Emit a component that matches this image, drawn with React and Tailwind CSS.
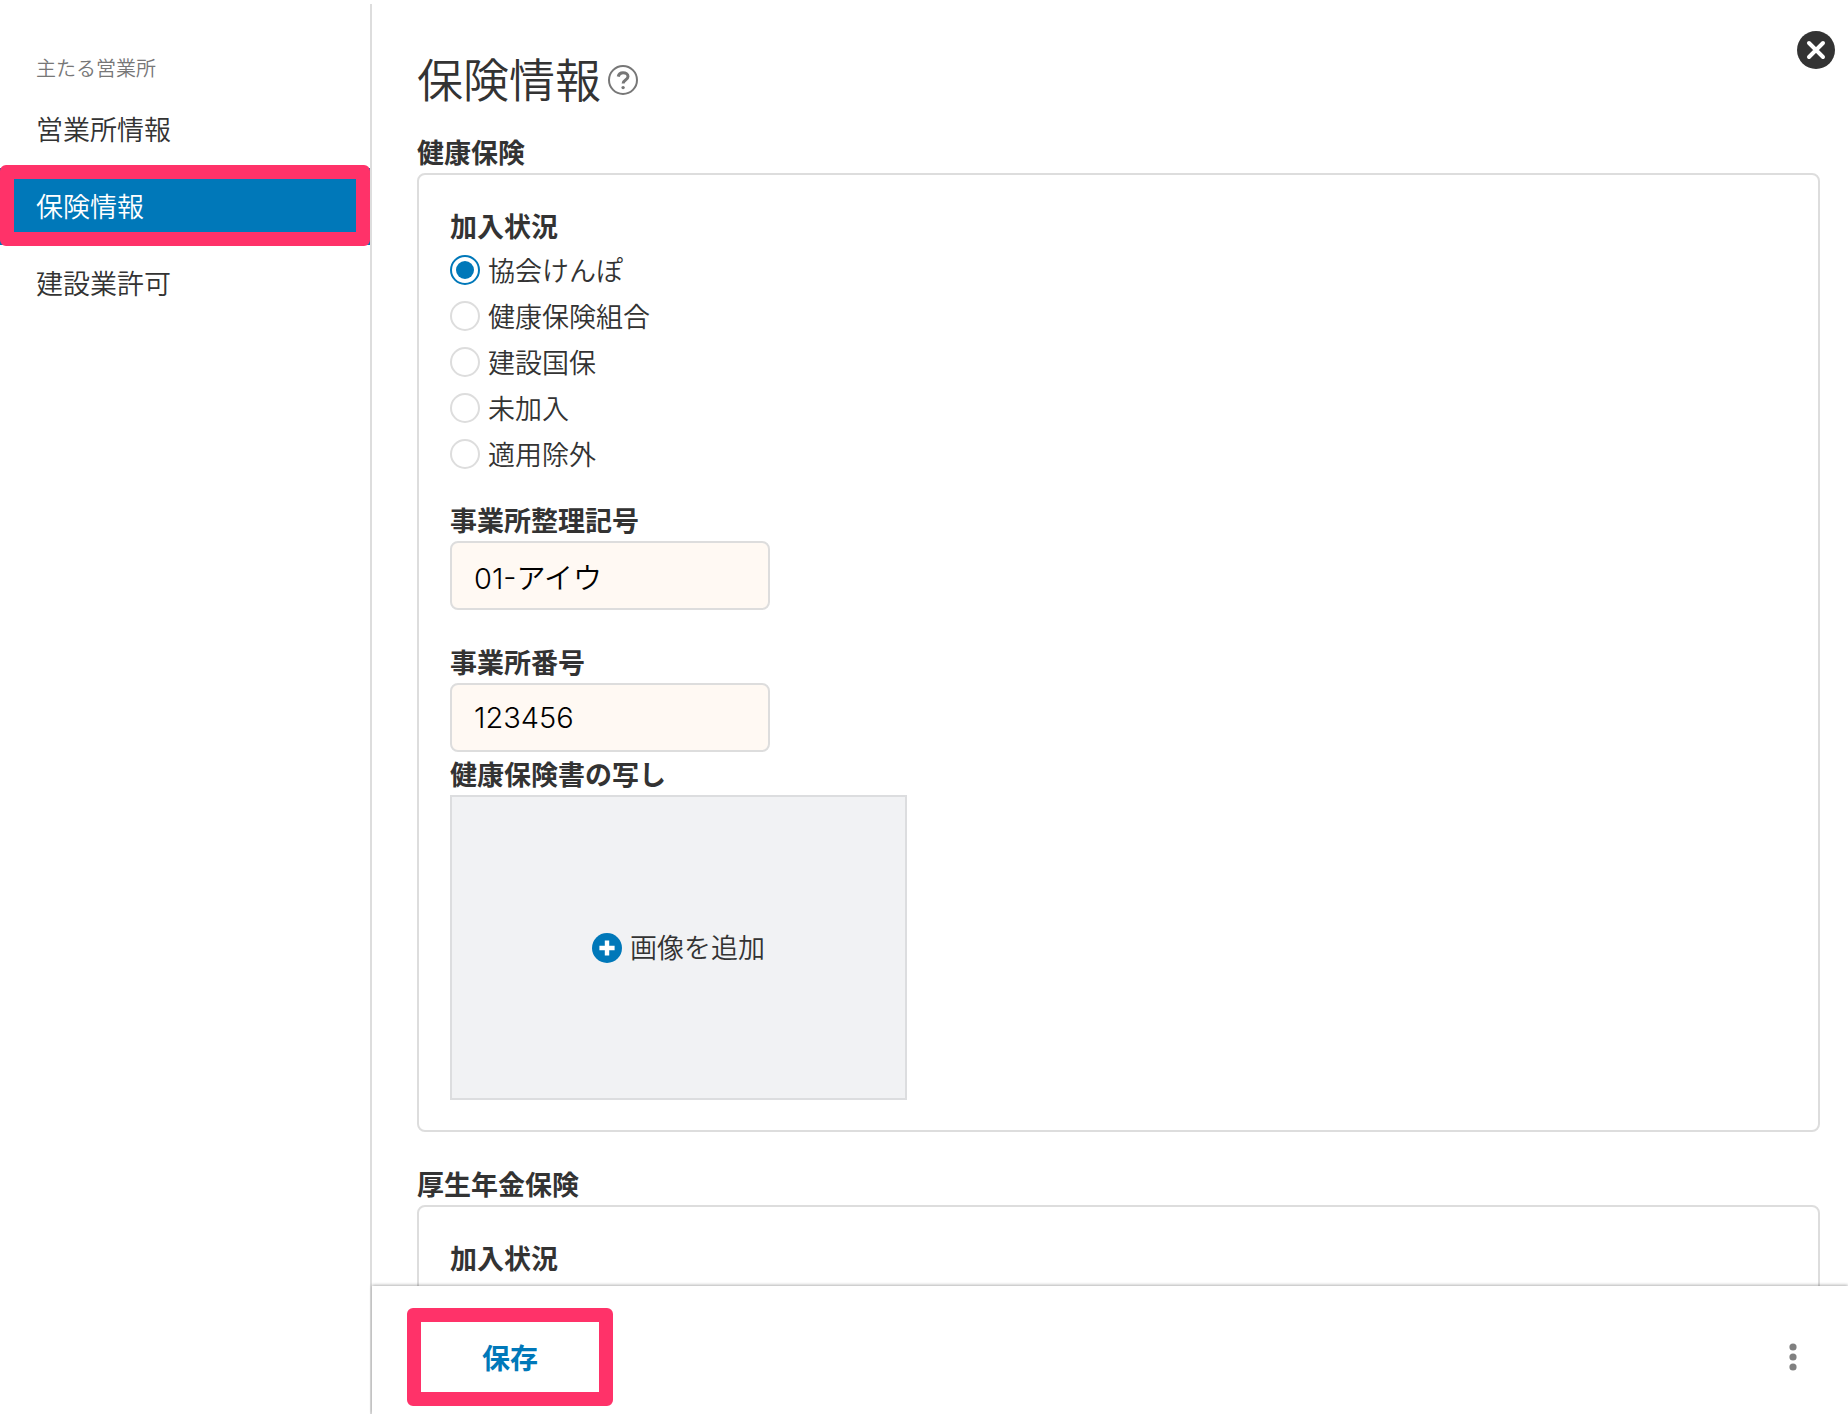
import React, { useState } from 'react';

const NAV_ITEMS = ['営業所情報', '保険情報', '建設業許可'];
const STATUS_OPTIONS = ['協会けんぽ', '健康保険組合', '建設国保', '未加入', '適用除外'];

export default function App() {
  const [current, setCurrent] = useState('保険情報');

  return (
    <div className="flex h-screen overflow-hidden bg-white font-['Noto_Sans_CJK_JP',sans-serif] font-[350] text-[#333333]">
      <aside className="mt-1 w-[372px] shrink-0 border-r-2 border-[#dddddd]">
        <h2 className="mt-11 mb-[3px] px-9 text-[20px] leading-10 text-[#777777]">主たる営業所</h2>
        <nav>
          {NAV_ITEMS.map((item) => (
            <NavItem key={item} label={item} active={item === current} onClick={() => setCurrent(item)} />
          ))}
        </nav>
      </aside>

      <div className="relative flex min-w-0 flex-1 flex-col">
        <main className="min-h-0 flex-1 overflow-hidden pr-7 pl-[45px]">
          <div className="flex items-center gap-[7px] pt-[47px] pb-6">
            <h1 className="text-[46px] leading-[60px]">保険情報</h1>
            <button type="button" aria-label="ヘルプ" className="pt-1.5">
              <HelpIcon />
            </button>
          </div>

          <Section title="健康保険">
            <StatusGroup name="health" options={STATUS_OPTIONS} defaultValue="協会けんぽ" />
            <TextField id="office-code" label="事業所整理記号" defaultValue="01-アイウ" className="mt-[22px]" />
            <TextField id="office-number" label="事業所番号" defaultValue="123456" className="mt-[31px]" />
            <div className="mt-px">
              <h3 className="text-[27px] leading-[42px] font-bold">健康保険書の写し</h3>
              <button
                type="button"
                className="flex h-[305px] w-[457px] items-center justify-center gap-2 border-2 border-[#dcdddf] bg-[#f1f2f4] text-[27px]"
              >
                <PlusIcon />
                画像を追加
              </button>
            </div>
          </Section>

          <Section title="厚生年金保険">
            <StatusGroup name="pension" options={[]} />
          </Section>
        </main>

        <footer className="z-10 flex h-32 shrink-0 items-center justify-between bg-white pr-[45px] pl-[35px] shadow-[0_-1px_3px_rgba(0,0,0,0.3)]">
          <button
            type="button"
            className="mt-3.5 h-[98px] w-[206px] rounded-md border-14 border-[#ff3269] text-[28px] font-bold text-[#0078b9]"
          >
            保存
          </button>
          <button type="button" aria-label="メニュー" className="mt-3.5">
            <DotsIcon />
          </button>
        </footer>

        <button type="button" aria-label="閉じる" className="absolute top-[31px] right-[13px]">
          <CloseIcon />
        </button>
      </div>
    </div>
  );
}

function NavItem({ label, active, onClick }) {
  return (
    <a
      href="#"
      onClick={onClick}
      className={`relative flex h-[77px] items-center px-9 text-[27px] ${active ? 'bg-[#0078b9] text-white' : ''}`}
    >
      {label}
      {active && <span className="absolute inset-x-0 -top-[3px] -bottom-px rounded-md border-14 border-[#ff3269]" />}
    </a>
  );
}

function Section({ title, children }) {
  return (
    <section className="mb-[31px]">
      <h2 className="text-[27px] leading-[42px] font-bold">{title}</h2>
      <div className="min-h-40 rounded-lg border-2 border-[#dddddd] px-[31px] py-[30px]">{children}</div>
    </section>
  );
}

function StatusGroup({ name, options, defaultValue }) {
  return (
    <fieldset>
      <legend className="text-[27px] leading-[42px] font-bold">加入状況</legend>
      {options.map((option) => (
        <label key={option} className="flex h-[46px] w-fit items-center gap-2 text-[27px]">
          <input
            type="radio"
            name={name}
            value={option}
            defaultChecked={option === defaultValue}
            className="size-[30px] appearance-none rounded-full border-2 border-[#dddddd] bg-white bg-clip-content p-1 checked:border-[#0078b9] checked:bg-[#0078b9]"
          />
          {option}
        </label>
      ))}
    </fieldset>
  );
}

function TextField({ id, label, defaultValue, className }) {
  return (
    <div className={className}>
      <label htmlFor={id} className="block text-[27px] leading-[42px] font-bold">
        {label}
      </label>
      <input
        id={id}
        type="text"
        defaultValue={defaultValue}
        className="block h-[69px] w-80 rounded-lg border-2 border-[#dddddd] bg-[#fff9f3] px-[22px] font-['Inter','Noto_Sans_CJK_JP',sans-serif] text-[29px] text-black"
      />
    </div>
  );
}

function HelpIcon() {
  return (
    <svg className="size-[30px]" viewBox="0 0 30 30" fill="none" stroke="#777777">
      <circle cx="15" cy="15" r="14" strokeWidth="2" />
      <path d="M10.2 11.6C10.8 9 12.6 7.8 15 7.8c2.8 0 5 1.4 5 3.8 0 3.4-4.9 3.4-4.9 6.8" strokeWidth="3" />
      <circle cx="15.1" cy="22.6" r="1.7" fill="#777777" stroke="none" />
    </svg>
  );
}

function PlusIcon() {
  return (
    <svg className="size-[30px]" viewBox="0 0 30 30">
      <circle cx="15" cy="15" r="15" fill="#0078b9" />
      <path d="M15 7.4v15.2M7.4 15h15.2" stroke="#ffffff" strokeWidth="4.4" />
    </svg>
  );
}

function CloseIcon() {
  return (
    <svg className="size-[38px]" viewBox="0 0 38 38">
      <circle cx="19" cy="19" r="19" fill="#333333" />
      <path d="M12 12l14 14M26 12L12 26" stroke="#ffffff" strokeWidth="4" strokeLinecap="round" />
    </svg>
  );
}

function DotsIcon() {
  return (
    <svg className="h-7 w-5" viewBox="0 0 20 28" fill="#808080">
      <circle cx="10" cy="4" r="3.6" />
      <circle cx="10" cy="14" r="3.6" />
      <circle cx="10" cy="24" r="3.6" />
    </svg>
  );
}
